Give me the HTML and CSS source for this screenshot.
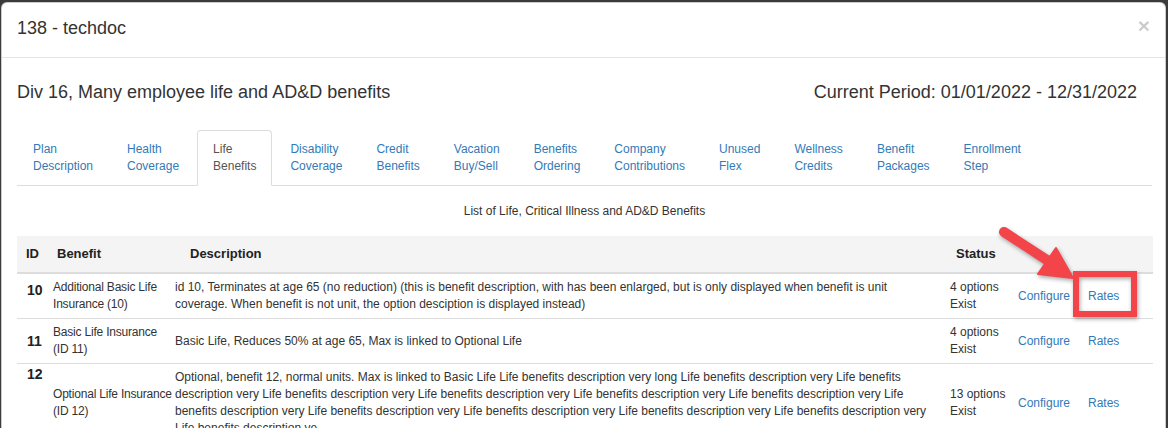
FILE: index.html
```html
<!DOCTYPE html>
<html>
<head>
<meta charset="utf-8">
<title>138 - techdoc</title>
<link rel="stylesheet" href="styles.css">
</head>
<body>
<div class="modal">
  <div class="modal-header">
    <button class="close" type="button">&times;</button>
    <h4 class="modal-title">138 - techdoc</h4>
  </div>
  <div class="modal-body">
    <div class="plan-row">
      <h4 class="plan-name">Div 16, Many employee life and AD&amp;D benefits</h4>
      <h4 class="plan-period">Current Period: 01/01/2022 - 12/31/2022</h4>
    </div>
    <ul class="nav-tabs">
      <li><a href="#">Plan<br>Description</a></li>
      <li><a href="#">Health<br>Coverage</a></li>
      <li class="active"><a href="#">Life<br>Benefits</a></li>
      <li><a href="#">Disability<br>Coverage</a></li>
      <li><a href="#">Credit<br>Benefits</a></li>
      <li><a href="#">Vacation<br>Buy/Sell</a></li>
      <li><a href="#">Benefits<br>Ordering</a></li>
      <li><a href="#">Company<br>Contributions</a></li>
      <li><a href="#">Unused<br>Flex</a></li>
      <li><a href="#">Wellness<br>Credits</a></li>
      <li><a href="#">Benefit<br>Packages</a></li>
      <li><a href="#">Enrollment<br>Step</a></li>
    </ul>
    <div class="caption">List of Life, Critical Illness and AD&amp;D Benefits</div>
    <table class="benefits">
      <colgroup>
        <col class="c-id"><col class="c-benefit"><col class="c-desc"><col class="c-status"><col class="c-conf"><col class="c-rates">
      </colgroup>
      <thead>
        <tr>
          <th class="h-id">ID</th>
          <th class="h-benefit">Benefit</th>
          <th class="h-desc">Description</th>
          <th class="h-status">Status</th>
          <th></th>
          <th></th>
        </tr>
      </thead>
      <tbody>
        <tr>
          <td class="id id-first">10</td>
          <td class="benefit">Additional Basic Life<br>Insurance (10)</td>
          <td>id 10, Terminates at age 65 (no reduction) (this is benefit description, with has been enlarged, but is only displayed when benefit is unit coverage. When benefit is not unit, the option desciption is displayed instead)</td>
          <td>4 options Exist</td>
          <td><a href="#">Configure</a></td>
          <td><a href="#">Rates</a></td>
        </tr>
        <tr>
          <td class="id id-mid">11</td>
          <td class="benefit">Basic Life Insurance<br>(ID 11)</td>
          <td>Basic Life, Reduces 50% at age 65, Max is linked to Optional Life</td>
          <td>4 options Exist</td>
          <td><a href="#">Configure</a></td>
          <td><a href="#">Rates</a></td>
        </tr>
        <tr>
          <td class="id id-last">12</td>
          <td class="benefit">Optional Life Insurance<br>(ID 12)</td>
          <td>Optional, benefit 12, normal units. Max is linked to Basic Life Life benefits description very long Life benefits description very Life benefits description very Life benefits description very Life benefits description very Life benefits description very Life benefits description very Life benefits description very Life benefits description very Life benefits description very Life benefits description very Life benefits description very Life benefits description ve</td>
          <td>13 options Exist</td>
          <td><a href="#">Configure</a></td>
          <td><a href="#">Rates</a></td>
        </tr>
      </tbody>
    </table>
  </div>
  <svg class="callout" width="160" height="110" viewBox="990 220 160 110" aria-hidden="true">
    <g class="callout-shapes">
      <line x1="1004" y1="232" x2="1050" y2="262" stroke="#f34549" stroke-width="10" stroke-linecap="round"/>
      <polygon points="1038,274 1056,248 1073,278" fill="#f34549" stroke="#f34549" stroke-width="2" stroke-linejoin="round"/>
      <rect x="1076" y="274" width="58" height="40" fill="none" stroke="#f34549" stroke-width="6"/>
    </g>
  </svg>
</div>
</body>
</html>
```
FILE: styles.css
```css
html, body {
  margin: 0;
  padding: 0;
}
body {
  background: #3b3b3b;
  font-family: "Liberation Sans", Arial, sans-serif;
  font-size: 12px;
  line-height: 1.42857;
  color: #333;
  height: 428px;
  overflow: hidden;
}
.modal {
  position: relative;
  margin: 2px 0 0 1px;
  width: 1165px;
  height: 440px;
  background: #fff;
  border: 1px solid rgba(0,0,0,.2);
  border-radius: 6px;
  box-sizing: border-box;
}
.modal-header {
  padding: 12px 15px 16px;
  border-bottom: 1px solid #e5e5e5;
}
.modal-title {
  margin: 0;
  font-size: 18px;
  font-weight: normal;
  line-height: 26px;
}
.close {
  float: right;
  padding: 0;
  margin: 0;
  border: 0;
  background: transparent;
  font-family: "Liberation Sans", Arial, sans-serif;
  font-size: 21px;
  font-weight: bold;
  line-height: 1;
  color: #000;
  opacity: .2;
}
.modal-body {
  padding: 0 13px 0 15px;
}
.plan-row {
  display: flex;
  justify-content: space-between;
  padding-top: 21px;
}
.plan-row h4 {
  margin: 0;
  font-size: 18px;
  font-weight: normal;
  line-height: 26px;
}
.plan-period {
  padding-right: 15px;
}
.nav-tabs {
  list-style: none;
  margin: 25px 0 0;
  padding: 0;
  display: flex;
  border-bottom: 1px solid #ddd;
}
.nav-tabs li {
  margin-right: 2px;
  margin-bottom: -1px;
}
.nav-tabs a {
  display: block;
  padding: 10px 15px;
  border: 1px solid transparent;
  border-radius: 4px 4px 0 0;
  color: #337ab7;
  text-decoration: none;
  line-height: 17px;
}
.nav-tabs li.active a {
  color: #555;
  background: #fff;
  border-color: #ddd #ddd transparent;
}
.caption {
  text-align: center;
  margin-top: 17px;
  line-height: 17px;
}
.benefits {
  margin-top: 16px;
  width: 1136px;
  table-layout: fixed;
  border-collapse: collapse;
}
.c-id { width: 31px; }
.c-benefit { width: 122px; }
.c-desc { width: 775px; }
.c-status { width: 68px; }
.c-conf { width: 70px; }
.c-rates { width: 70px; }
.benefits thead tr {
  background: #f4f4f4;
}
.benefits th {
  text-align: left;
  font-size: 13px;
  font-weight: bold;
  color: #222;
  height: 36px;
  padding: 0 5px;
  vertical-align: middle;
  border-bottom: 2px solid #ddd;
}
.benefits th.h-id { padding-left: 9px; }
.benefits th.h-benefit { padding-left: 9px; }
.benefits th.h-desc { padding-left: 20px; }
.benefits th.h-status { padding-left: 11px; }
.benefits td {
  padding: 5px;
  vertical-align: middle;
  border-bottom: 1px solid #ddd;
  line-height: 17px;
}
.benefits td.id {
  vertical-align: top;
  padding-left: 10px;
  padding-right: 0;
  font-size: 14px;
  font-weight: bold;
  color: #222;
}
.benefits td.id-first {
  padding-top: 8px;
}
.benefits td.id-mid {
  vertical-align: middle;
}
.benefits td.id-last {
  padding-top: 2px;
}
.benefits td.benefit {
  white-space: nowrap;
  letter-spacing: -0.2px;
}
.benefits a {
  color: #337ab7;
  text-decoration: none;
}
.callout {
  position: absolute;
  left: 988px;
  top: 217px;
  overflow: visible;
}
.callout-shapes {
  filter: drop-shadow(1px 2px 2px rgba(0,0,0,.35));
}
```
